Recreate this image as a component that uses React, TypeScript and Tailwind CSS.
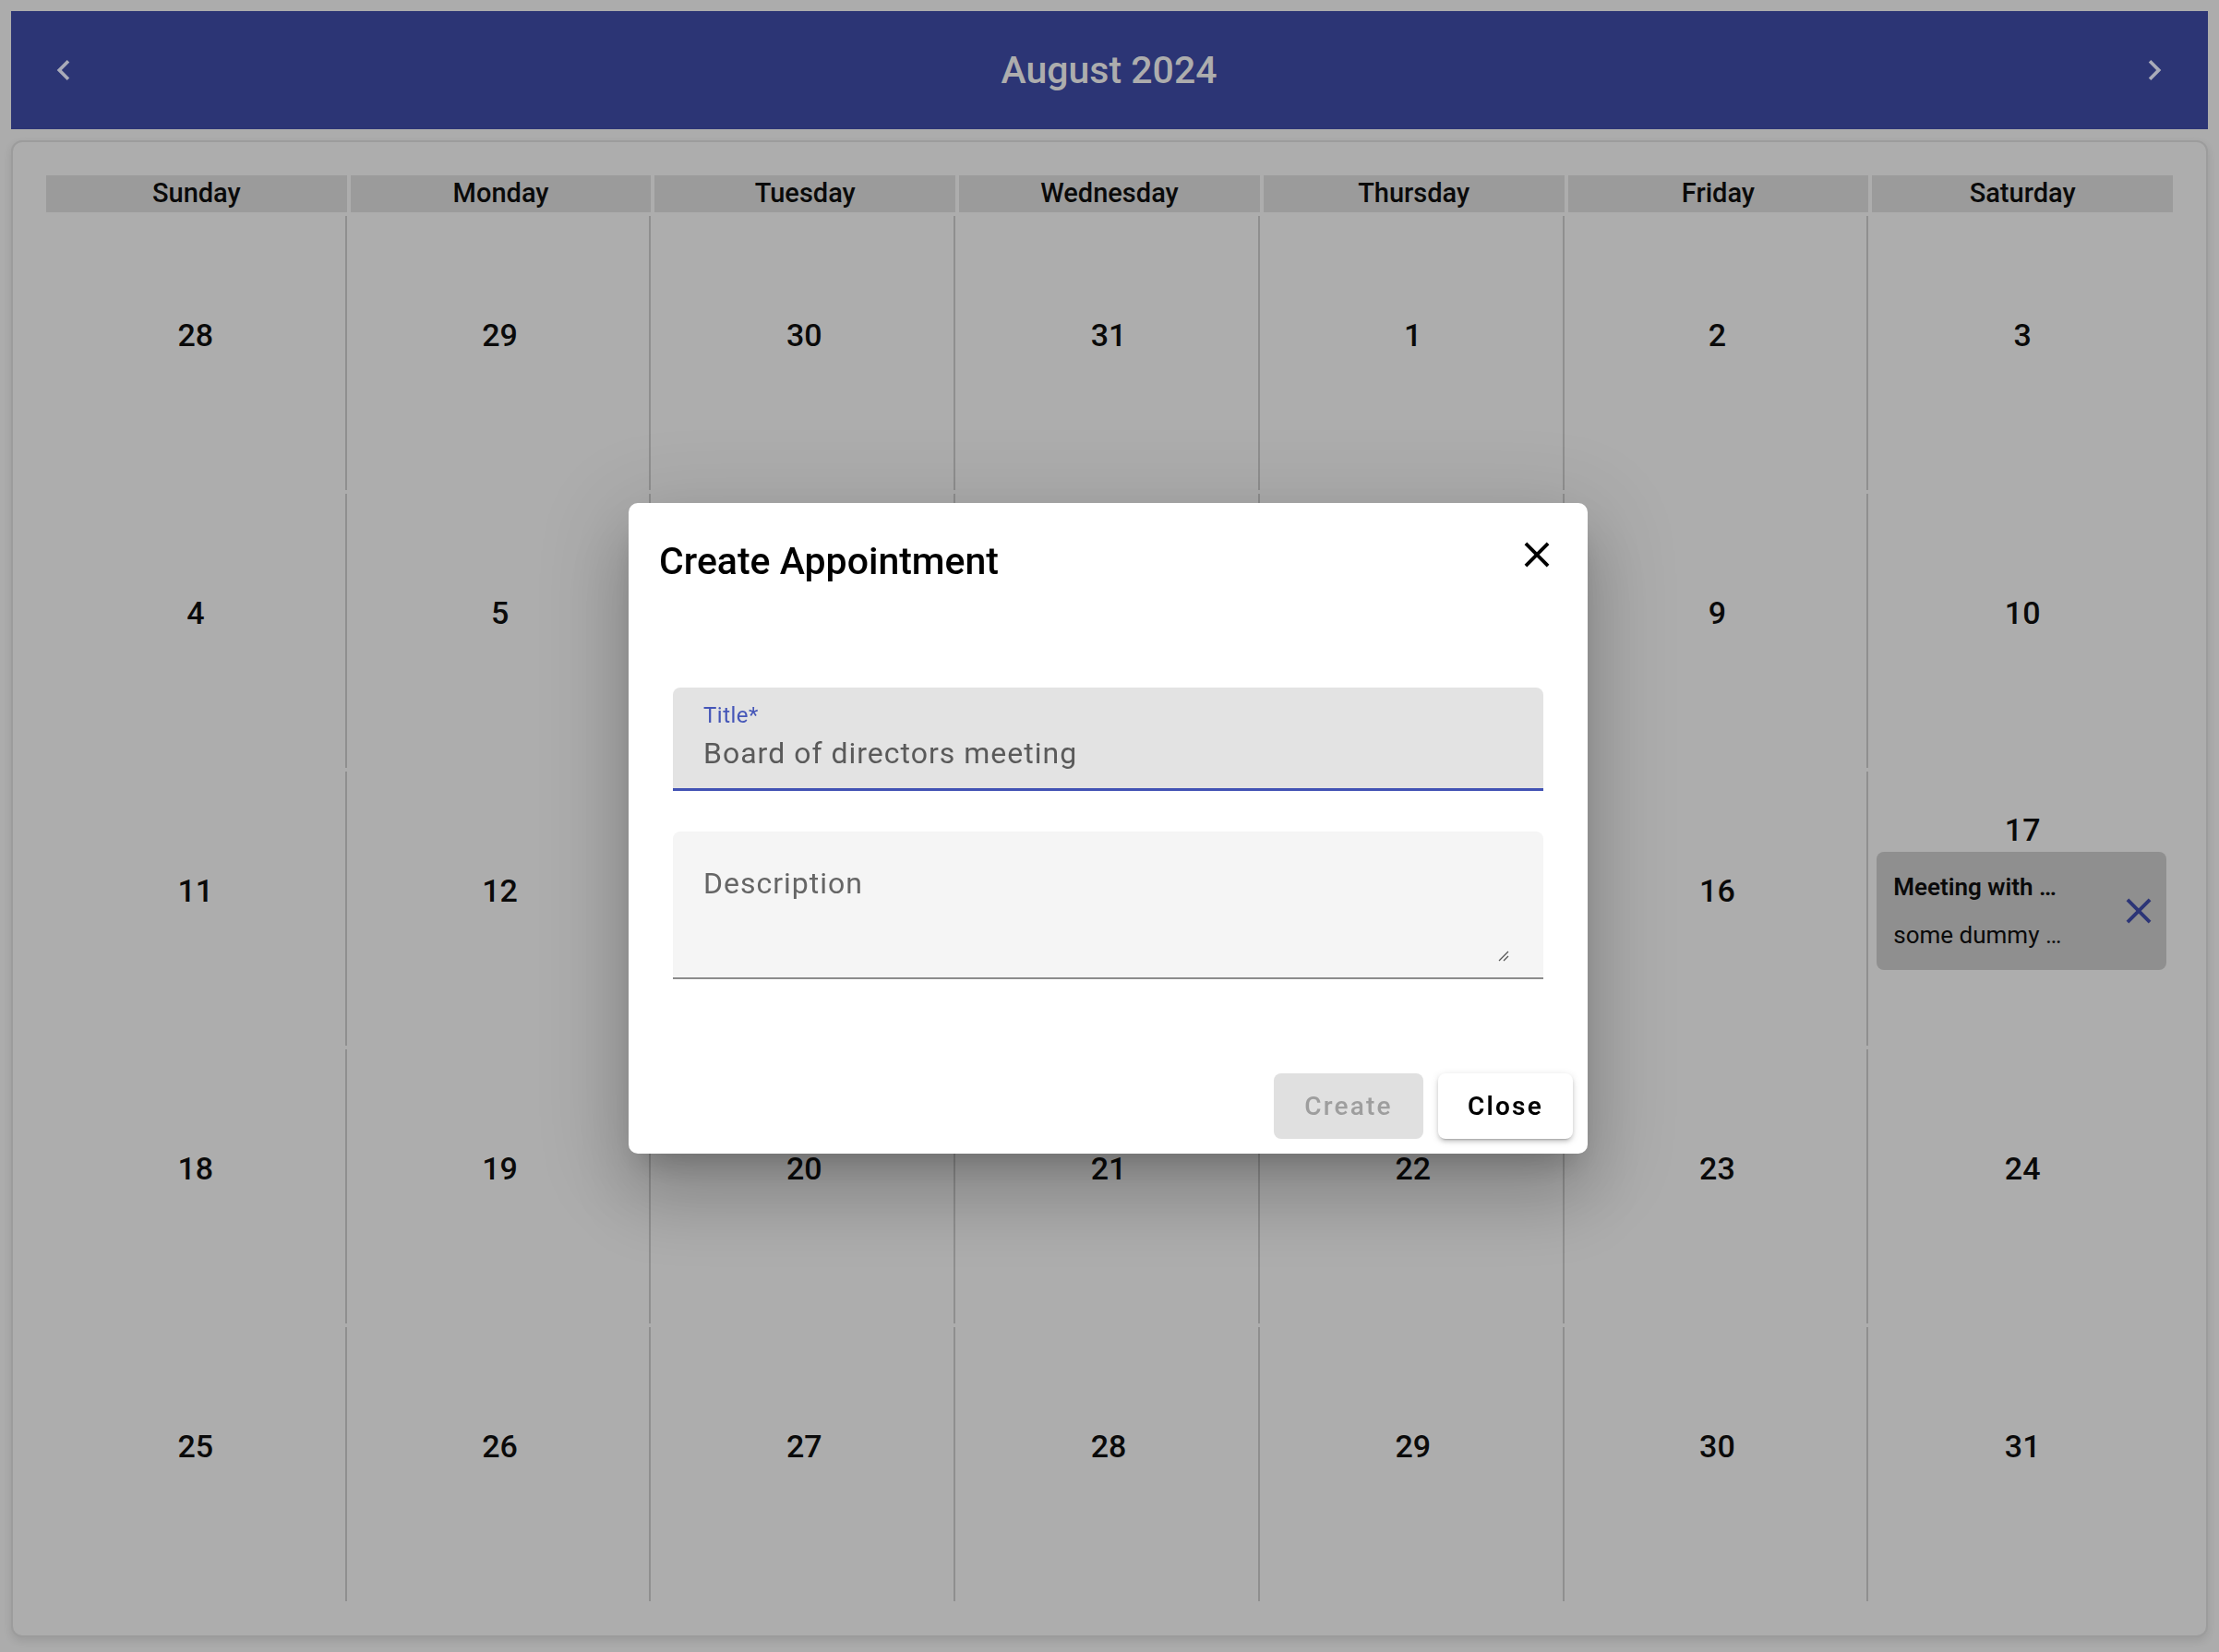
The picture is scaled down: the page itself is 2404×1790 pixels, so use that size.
import { MdChevronLeft, MdChevronRight, MdClose } from 'react-icons/md'

const DAYS = ['Sunday', 'Monday', 'Tuesday', 'Wednesday', 'Thursday', 'Friday', 'Saturday']

const WEEKS = [
  [28, 29, 30, 31, 1, 2, 3],
  [4, 5, 6, 7, 8, 9, 10],
  [11, 12, 13, 14, 15, 16, 17],
  [18, 19, 20, 21, 22, 23, 24],
  [25, 26, 27, 28, 29, 30, 31],
]

function EventCard() {
  return (
    <div className="mt-[4px] ml-[5px] mr-[7px] self-stretch flex items-center justify-between rounded-[8px] bg-[#8f8f8f] pl-[18px] pr-[7px] py-[21px]">
      <div className="flex flex-col gap-[18px]">
        <p className="text-[26px] leading-[34px] font-semibold text-[#0a0a0a]">Meeting with …</p>
        <p className="text-[26px] leading-[34px] text-[#0a0a0a]">some dummy …</p>
      </div>
      <MdClose className="w-[46px] h-[46px] text-[#2c3577]" />
    </div>
  )
}

function DayCell({ day, col, event }: { day: number; col: number; event?: boolean }) {
  return (
    <div
      className={`h-[297px] flex flex-col items-center justify-center pb-[40px] ${col < 6 ? 'border-r-2 border-[#8f8f8f]' : ''}`}
    >
      <span className="text-[34px] leading-[40px] font-medium text-[#0a0a0a]">{day}</span>
      {event && <EventCard />}
    </div>
  )
}

function CreateDialog() {
  return (
    <div className="fixed inset-0 flex items-center justify-center">
      <div className="mt-[5px] mr-[3px] w-[1039px] h-[705px] rounded-[10px] bg-white flex flex-col shadow-[0_22px_30px_-14px_rgba(0,0,0,0.2),0_48px_76px_6px_rgba(0,0,0,0.14),0_18px_92px_16px_rgba(0,0,0,0.12)]">
        <div className="flex items-start justify-between pt-[33px] pl-[33px] pr-[32px]">
          <h2 className="mt-[2px] text-[41px] leading-[56px] font-medium text-black">Create Appointment</h2>
          <MdClose className="w-[46px] h-[46px] text-black" />
        </div>

        <div className="mt-[109px] mx-[48px] flex flex-col">
          <div className="h-[112px] rounded-t-[8px] bg-[#e3e3e3] border-b-[3px] border-[#4152b4] pt-[16px] px-[33px]">
            <p className="text-[24px] leading-[28px] tracking-[0.5px] text-[#4556b8]">Title*</p>
            <p className="mt-[7px] text-[32px] leading-[40px] tracking-[1px] text-[#5a5a5a]">Board of directors meeting</p>
          </div>

          <div className="relative mt-[44px] h-[160px] rounded-t-[8px] bg-[#f5f5f5] border-b-2 border-[#8c8c8c] pt-[36px] px-[33px]">
            <p className="text-[32px] leading-[40px] tracking-[1px] text-[#666666]">Description</p>
            <svg className="absolute right-[37px] bottom-[17px] w-[12px] h-[12px]" viewBox="0 0 12 12">
              <line x1="1" y1="11" x2="11" y2="1" stroke="#555" strokeWidth="1.2" />
              <line x1="6" y1="11" x2="11" y2="6" stroke="#555" strokeWidth="1.2" />
            </svg>
          </div>
        </div>

        <div className="mt-auto flex justify-end gap-[16px] pr-[16px] pb-[16px]">
          <button className="w-[162px] h-[71px] rounded-[8px] bg-[#e0e0e0] text-[28px] leading-[71px] font-medium tracking-[2.2px] text-[#9e9e9e]">
            Create
          </button>
          <button className="w-[146px] h-[71px] rounded-[8px] bg-white text-[28px] leading-[71px] font-semibold tracking-[2.2px] text-black shadow-[0_4px_2px_-3px_rgba(0,0,0,0.2),0_3px_4px_0_rgba(0,0,0,0.14),0_2px_10px_0_rgba(0,0,0,0.12)]">
            Close
          </button>
        </div>
      </div>
    </div>
  )
}

export default function App() {
  return (
    <div className="relative w-[2404px] h-[1790px] overflow-hidden bg-[#acacac] p-[12px] font-['Roboto','Liberation_Sans',sans-serif]">
      <header className="h-[128px] bg-[#2c3575] flex items-center justify-between pl-[35px] pr-[36px]">
        <MdChevronLeft className="w-[44px] h-[44px] text-[#a9abb9]" />
        <h1 className="text-[41px] leading-[50px] font-medium text-[#adadad]">August 2024</h1>
        <MdChevronRight className="w-[44px] h-[44px] text-[#a9abb9]" />
      </header>

      <section className="mt-[12px] rounded-[12px] border-2 border-[#9c9c9c] bg-[#adadad] pt-[36px] px-[36px] pb-[37px] shadow-[0_4px_10px_rgba(0,0,0,0.1)]">
        <div className="grid grid-cols-7 gap-x-[4px]">
          {DAYS.map(d => (
            <div key={d} className="h-[40px] bg-[#9b9b9b] flex items-center justify-center text-[29px] font-medium text-[#0a0a0a]">
              {d}
            </div>
          ))}
        </div>
        <div className="mt-[4px] grid grid-cols-7 gap-x-[4px] gap-y-[4px]">
          {WEEKS.map((week, w) =>
            week.map((day, c) => (
              <DayCell key={`${w}-${c}`} day={day} col={c} event={w === 2 && c === 6} />
            )),
          )}
        </div>
      </section>

      <CreateDialog />
    </div>
  )
}
